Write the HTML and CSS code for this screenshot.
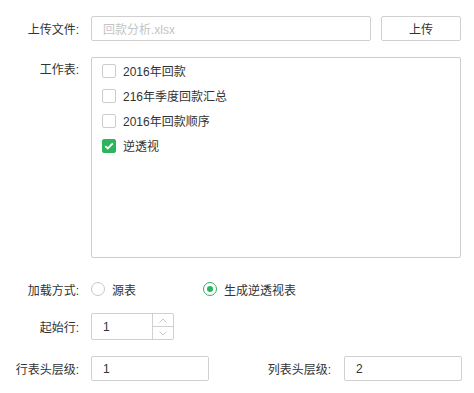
FILE: index.html
```html
<!DOCTYPE html>
<html lang="zh">
<head>
<meta charset="utf-8">
<link rel="stylesheet" href="styles.css">
</head>
<body>
<div class="form">
  <div class="row r-upload">
    <label class="lbl">上传文件:</label>
    <div class="input file">回款分析.xlsx</div>
    <button class="btn">上传</button>
  </div>
  <div class="row r-sheets">
    <label class="lbl top">工作表:</label>
    <div class="sheetbox">
      <div class="chk"><span class="box"></span><span>2016年回款</span></div>
      <div class="chk"><span class="box"></span><span>216年季度回款汇总</span></div>
      <div class="chk"><span class="box"></span><span>2016年回款顺序</span></div>
      <div class="chk"><span class="box on"><svg width="10" height="8" viewBox="0 0 10 8"><path d="M1.2 4.1 L3.8 6.5 L8.8 1.4" fill="none" stroke="#fff" stroke-width="1.8"/></svg></span><span>逆透视</span></div>
    </div>
  </div>
  <div class="row r-radio">
    <label class="lbl">加载方式:</label>
    <div class="radio first"><span class="circ"></span><span>源表</span></div>
    <div class="radio"><span class="circ on"></span><span>生成逆透视表</span></div>
  </div>
  <div class="row r-start">
    <label class="lbl">起始行:</label>
    <div class="spin">
      <span class="val">1</span>
      <div class="arrows">
        <span class="arr"><svg width="8" height="5" viewBox="0 0 8 5"><path d="M0.5 4.5 L4 1 L7.5 4.5" fill="none" stroke="#c8c8c8" stroke-width="1"/></svg></span>
        <span class="arr down"><svg width="8" height="5" viewBox="0 0 8 5"><path d="M0.5 0.5 L4 4 L7.5 0.5" fill="none" stroke="#c8c8c8" stroke-width="1"/></svg></span>
      </div>
    </div>
  </div>
  <div class="row r-levels">
    <label class="lbl">行表头层级:</label>
    <div class="input num">1</div>
    <label class="lbl2">列表头层级:</label>
    <div class="input num">2</div>
  </div>
</div>
</body>
</html>
```
FILE: styles.css
```css
* { box-sizing: border-box; }
body {
  margin: 0;
  background: #fff;
  font-family: "Liberation Sans", "Noto Sans CJK SC", sans-serif;
  font-size: 12px;
  color: #333;
}
.form {
  display: flex;
  flex-direction: column;
  padding-top: 16px;
}
.row {
  display: flex;
  align-items: center;
}
.lbl {
  width: 79px;
  text-align: right;
  margin-right: 12px;
  flex: none;
}
.lbl.top { align-self: flex-start; margin-top: 3px; }
.input {
  height: 25px;
  border: 1px solid #d0d0d0;
  border-radius: 2px;
  display: flex;
  align-items: center;
  padding-left: 11px;
}
.file {
  width: 280px;
  color: #c4c4c4;
}
.btn {
  margin-left: 10px;
  width: 80px;
  height: 25px;
  border: 1px solid #d0d0d0;
  border-radius: 2px;
  background: #fff;
  font: inherit;
  color: #333;
  padding: 0;
}
.r-sheets { margin-top: 16px; }
.sheetbox {
  width: 370px;
  height: 201px;
  border: 1px solid #cdcdcd;
  border-radius: 2px;
  padding: 0 10px;
}
.chk {
  display: flex;
  align-items: center;
  height: 25px;
}
.box {
  width: 14px;
  height: 14px;
  border: 1px solid #ccc;
  border-radius: 2px;
  margin-right: 7px;
  display: flex;
  align-items: center;
  justify-content: center;
}
.box.on {
  background: #2db55d;
  border-color: #2db55d;
}
.r-radio { margin-top: 19px; height: 24px; }
.radio {
  display: flex;
  align-items: center;
}
.radio.first { width: 112px; }
.circ {
  width: 14px;
  height: 14px;
  border: 1px solid #c8c8c8;
  border-radius: 50%;
  margin-right: 7px;
  display: flex;
  align-items: center;
  justify-content: center;
}
.circ.on { border-color: #2db55d; }
.circ.on::after {
  content: "";
  width: 6px;
  height: 6px;
  border-radius: 50%;
  background: #2db55d;
}
.r-start { margin-top: 12px; }
.spin {
  width: 83px;
  height: 27px;
  border: 1px solid #d0d0d0;
  border-radius: 2px;
  display: flex;
}
.spin .val {
  flex: 1;
  display: flex;
  align-items: center;
  padding-left: 11px;
}
.arrows {
  width: 21px;
  border-left: 1px solid #d0d0d0;
  display: flex;
  flex-direction: column;
}
.arr {
  flex: 1;
  display: flex;
  align-items: center;
  justify-content: center;
}
.arr.down { border-top: 1px solid #d0d0d0; }
.r-levels { margin-top: 16px; }
.num { width: 118px; }
.lbl2 {
  width: 122px;
  text-align: right;
  margin-right: 13px;
}
```
